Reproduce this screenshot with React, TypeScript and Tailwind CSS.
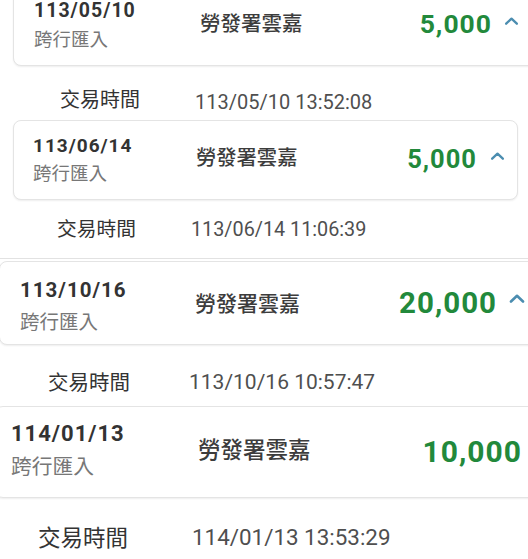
import React from 'react';

type Entry = {
  date: string;
  amount: string;
  time: string;
  wrap: string;
  card: string;
  left: string;
  dateCls: string;
  subCls: string;
  nameCls: string;
  amountCls: string;
  caretCls: string;
  caretW: number;
  row: string;
  labelCls: string;
  timeCls: string;
  sep: string;
};

const entries: Entry[] = [
  {
    date: '113/05/10',
    amount: '5,000',
    time: '113/05/10 13:52:08',
    wrap: 'h-[120px]',
    card: '-mt-[12px] ml-[13px] -mr-[20px] h-[78px] rounded-b-[8px] pt-[12px] pl-[20px] pr-[28px]',
    left: 'w-[166px]',
    dateCls: 'text-[19.5px]',
    subCls: 'mt-[10.5px] text-[18.5px]',
    nameCls: 'mt-[13px] text-[20.5px]',
    amountCls: 'mt-[9.5px] text-[26.5px]',
    caretCls: 'mt-[16px] ml-[12px]',
    caretW: 15,
    row: 'pl-[60px] pt-[24px]',
    labelCls: 'w-[135px] text-[20px]',
    timeCls: 'mt-[2px] text-[20px]',
    sep: 'mt-[8px] ml-[12px] mr-[5px]',
  },
  {
    date: '113/06/14',
    amount: '5,000',
    time: '113/06/14 11:06:39',
    wrap: 'h-[141px]',
    card: 'ml-[13px] mr-[10px] h-[80px] rounded-[8px] pt-[14.5px] pl-[19px] pr-[12px]',
    left: 'w-[163px]',
    dateCls: 'text-[19px]',
    subCls: 'mt-[10.5px] text-[18.5px]',
    nameCls: 'mt-[12.5px] text-[20.3px]',
    amountCls: 'mt-[11px] text-[25.5px]',
    caretCls: 'mt-[16px] ml-[13px]',
    caretW: 15,
    row: 'pl-[57px] pt-[20px]',
    labelCls: 'w-[134px] text-[19.75px]',
    timeCls: 'mt-[0px] text-[19.8px]',
    sep: 'mt-[18px] ml-0 mr-0',
  },
  {
    date: '113/10/16',
    amount: '20,000',
    time: '113/10/16 10:57:47',
    wrap: 'h-[145px]',
    card: '-ml-[1px] -mr-[20px] h-[84px] rounded-[8px] pt-[18px] pl-[20px] pr-[22px]',
    left: 'w-[175px]',
    dateCls: 'text-[20.5px]',
    subCls: 'mt-[12px] text-[19.5px]',
    nameCls: 'mt-[14px] text-[21px]',
    amountCls: 'mt-[9px] text-[29.5px]',
    caretCls: 'mt-[14px] ml-[12px]',
    caretW: 16,
    row: 'pl-[48px] pt-[28px]',
    labelCls: 'w-[141px] text-[20.5px]',
    timeCls: 'mt-[-1px] text-[21px]',
    sep: 'hidden',
  },
  {
    date: '114/01/13',
    amount: '10,000',
    time: '114/01/13 13:53:29',
    wrap: 'h-[153px]',
    card: '-ml-[5px] -mr-[40px] h-[92px] rounded-[8px] pt-[16px] pl-[15px] pr-[16px]',
    left: 'w-[187px]',
    dateCls: 'text-[22px]',
    subCls: 'mt-[12px] text-[20.75px]',
    nameCls: 'mt-[16px] text-[22.5px]',
    amountCls: 'mt-[14px] text-[30px]',
    caretCls: 'mt-[18px] ml-[12px]',
    caretW: 17,
    row: 'pl-[38px] pt-[29px]',
    labelCls: 'w-[154px] text-[22.5px]',
    timeCls: 'mt-[-1.5px] text-[22.4px]',
    sep: 'hidden',
  },
];

const Caret: React.FC<{ w: number; className: string }> = ({ w, className }) => (
  <svg
    className={className}
    width={w}
    height={Math.round(w * 0.55)}
    viewBox="0 0 16 9"
    fill="none"
    stroke="#4b8db0"
    strokeWidth="2.6"
    strokeLinecap="round"
    strokeLinejoin="round"
  >
    <path d="M2 7.5 8 1.8l6 5.7" />
  </svg>
);

const Section: React.FC<{ e: Entry }> = ({ e }) => (
  <section className={`${e.wrap} overflow-hidden`}>
    <div
      className={`${e.card} flex items-start border border-[#e4e4e4] bg-white shadow-[0_1px_2px_rgba(0,0,0,0.07)]`}
    >
      <div className={`${e.left} shrink-0`}>
        <div className={`${e.dateCls} font-bold leading-none tracking-[1px] text-[#333]`}>{e.date}</div>
        <div className={`${e.subCls} leading-none text-[#777]`}>跨行匯入</div>
      </div>
      <div className={`${e.nameCls} font-medium leading-none text-[#3c3c3c]`}>勞發署雲嘉</div>
      <div className="flex-1" />
      <div className={`${e.amountCls} font-bold leading-none tracking-[1px] text-[#22893b]`}>{e.amount}</div>
      <Caret w={e.caretW} className={`${e.caretCls} shrink-0`} />
    </div>
    <div className={`${e.row} flex items-start`}>
      <div className={`${e.labelCls} shrink-0 leading-none text-[#333]`}>交易時間</div>
      <div className={`${e.timeCls} leading-none text-[#4f4f4f]`}>{e.time}</div>
    </div>
    <div className={`${e.sep} h-px bg-[#e2e2e2]`} />
  </section>
);

export default function App() {
  return (
    <div className="h-[559px] w-[528px] overflow-hidden bg-white font-['Roboto','Noto_Sans_CJK_TC',sans-serif]">
      {entries.map((e) => (
        <Section key={e.date} e={e} />
      ))}
    </div>
  );
}
